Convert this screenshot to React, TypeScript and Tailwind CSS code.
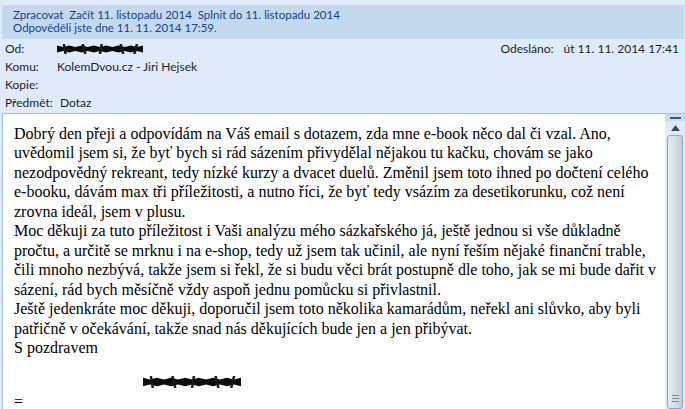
import React from "react";

const lines = [
  "Dobrý den přeji a odpovídám na Váš email s dotazem, zda mne e-book něco dal či vzal. Ano,",
  "uvědomil jsem si, že byť bych si rád sázením přivydělal nějakou tu kačku, chovám se jako",
  "nezodpovědný rekreant, tedy nízké kurzy a dvacet duelů. Změnil jsem toto ihned po dočtení celého",
  "e-booku, dávám max tři příležitosti, a nutno říci, že byť tedy vsázím za desetikorunku, což není",
  "zrovna ideál, jsem v plusu.",
  "Moc děkuji za tuto příležitost i Vaši analýzu mého sázkařského já, ještě jednou si vše důkladně",
  "pročtu, a určitě se mrknu i na e-shop, tedy už jsem tak učinil, ale nyní řeším nějaké finanční trable,",
  "čili mnoho nezbývá, takže jsem si řekl, že si budu věci brát postupně dle toho, jak se mi bude dařit v",
  "sázení, rád bych měsíčně vždy aspoň jednu pomůcku si přivlastnil.",
  "Ještě jedenkráte moc děkuji, doporučil jsem toto několika kamarádům, neřekl ani slůvko, aby byli",
  "patřičně v očekávání, takže snad nás děkujících bude jen a jen přibývat.",
  "S pozdravem",
];

function Scribble({ w, h }: { w: number; h: number }) {
  const pts: string[] = [];
  const n = 14;
  for (let i = 0; i <= n; i++) {
    const x = (w * i) / n;
    const y = i % 2 === 0 ? h * 0.15 : h * 0.3;
    pts.push(`${x.toFixed(1)},${y.toFixed(1)}`);
  }
  for (let i = n; i >= 0; i--) {
    const x = (w * i) / n;
    const y = i % 2 === 0 ? h * 0.85 : h * 0.7;
    pts.push(`${x.toFixed(1)},${y.toFixed(1)}`);
  }
  return (
    <svg width={w} height={h} viewBox={`0 0 ${w} ${h}`} className="block">
      <polygon points={pts.join(" ")} fill="#0d0d0d" />
      <path
        d={`M${w * 0.08} 0 L ${w * 0.1} ${h} M ${w * 0.3} 0 L ${w * 0.33} ${h} M ${w * 0.52} 0 L ${w * 0.5} ${h} M ${w * 0.74} 0 L ${w * 0.77} ${h} M ${w * 0.93} 0 L ${w * 0.9} ${h}`}
        stroke="#1a1a1a"
        strokeWidth="2.5"
      />
    </svg>
  );
}

export default function App() {
  return (
    <div
      className="w-[685px] h-[409px] overflow-hidden bg-[#dfebfa] flex flex-col"
      style={{ fontFamily: "Lato, 'Noto Sans', sans-serif" }}
    >
      <div className="pt-[5px] pl-[2px] pr-[1px]">
        <div className="bg-[#c3d9ee] h-[34px] pl-[11px] pt-[3px] text-[11.5px] leading-[13px] text-[#15428b]">
          <div className="whitespace-nowrap">Zpracovat&nbsp; Začít 11. listopadu 2014&nbsp; Splnit do 11. listopadu 2014</div>
          <div className="whitespace-nowrap">Odpověděli jste dne 11. 11. 2014 17:59.</div>
        </div>
      </div>
      <div className="text-[12px] text-[#1e1e1e] pl-[5px] pt-[1px]">
        <div className="flex h-[18px] items-center">
          <div className="w-[52px]">Od:</div>
          <Scribble w={86} h={10} />
          <div className="flex-1" />
          <div className="mr-[10px]">Odesláno:</div>
          <div className="pr-[6px]">út 11. 11. 2014 17:41</div>
        </div>
        <div className="flex h-[18px] items-center">
          <div className="w-[52px]">Komu:</div>
          <div>KolemDvou.cz - Jiri Hejsek</div>
        </div>
        <div className="flex h-[18px] items-center">
          <div className="w-[52px]">Kopie:</div>
        </div>
        <div className="flex h-[18px] items-center">
          <div className="w-[55px]">Předmět:</div>
          <div>Dotaz</div>
        </div>
      </div>
      <div className="flex flex-1 mt-[1px] ml-[2px] border-t border-l border-[#a7bcd6] bg-white min-h-0">
        <div
          className="flex-1 pl-[11px] pt-[10px] text-[16px] leading-[19.45px] text-black"
          style={{ fontFamily: "'Liberation Serif', 'Times New Roman', serif" }}
        >
          {lines.map((l, i) => (
            <div key={i} className="whitespace-nowrap">{l}</div>
          ))}
          <div className="h-[15px]" />
          <div className="h-[19.5px] flex items-center pl-[129px]">
            <Scribble w={98} h={12} />
          </div>
          <div>=</div>
        </div>
        <div className="w-[20px] bg-[#dfebfa] flex flex-col items-center">
          <div className="w-full h-[7px] flex items-center justify-center bg-[#c9dcf0]">
            <div className="w-[11px] h-[2px] bg-[#3b5c8a]" />
          </div>
          <div className="h-[14px] w-full flex items-center justify-center">
            <svg width="9" height="6" viewBox="0 0 9 6">
              <path d="M0 6 L4.5 0 L9 6 Z" fill="#3a4a5e" />
            </svg>
          </div>
          <div className="w-[16px] flex-1 rounded-[3px] border border-[#8fa4bd] bg-gradient-to-r from-[#e6ebf1] via-[#d6dde6] to-[#c5ced9] flex items-end justify-center pb-[6px]">
            <div className="flex flex-col gap-[2px]">
              <div className="w-[7px] h-px bg-[#7f8c9b]" />
              <div className="w-[7px] h-px bg-[#7f8c9b]" />
              <div className="w-[7px] h-px bg-[#7f8c9b]" />
            </div>
          </div>
        </div>
      </div>
    </div>
  );
}
